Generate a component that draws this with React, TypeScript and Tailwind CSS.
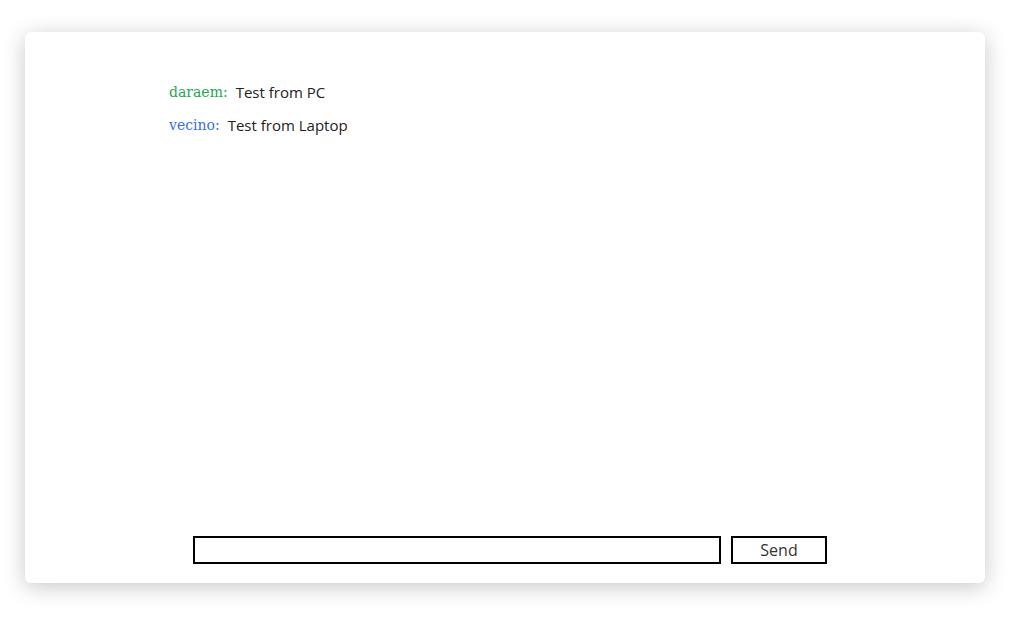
import { useState } from 'react';

type Message = { user: string; text: string; color: string };

const initial: Message[] = [
  { user: 'daraem', text: 'Test from PC', color: 'text-[#1fa552]' },
  { user: 'vecino', text: 'Test from Laptop', color: 'text-[#3a6fe6]' },
];

export default function App() {
  const [messages] = useState<Message[]>(initial);
  const [draft, setDraft] = useState('');

  return (
    <div className="min-h-screen bg-white pt-[32px] pl-[25px]">
      <div className="flex h-[551px] w-[960px] flex-col rounded-md bg-white shadow-[0_4px_22px_rgba(0,0,0,0.22)]">
        <ul className="flex flex-1 flex-col gap-[9px] pl-[144px] pt-[48px]">
          {messages.map((m) => (
            <li key={m.user} className="flex h-6 items-center gap-2">
              <span className={`font-['DejaVu_Serif',serif] text-[14px] ${m.color}`}>{m.user}:</span>
              <span className="font-['Open_Sans',sans-serif] text-[15px] text-[#222]">{m.text}</span>
            </li>
          ))}
        </ul>
        <form
          className="flex gap-[10px] pb-[19px] pl-[168px]"
          onSubmit={(e) => {
            e.preventDefault();
            setDraft('');
          }}
        >
          <input
            value={draft}
            onChange={(e) => setDraft(e.target.value)}
            className="h-[28px] w-[528px] border-2 border-black bg-white px-1 outline-none"
          />
          <button
            type="submit"
            className="h-[28px] w-[96px] border-2 border-black bg-white font-['Open_Sans',sans-serif] text-[16px] text-[#333]"
          >
            Send
          </button>
        </form>
      </div>
    </div>
  );
}
